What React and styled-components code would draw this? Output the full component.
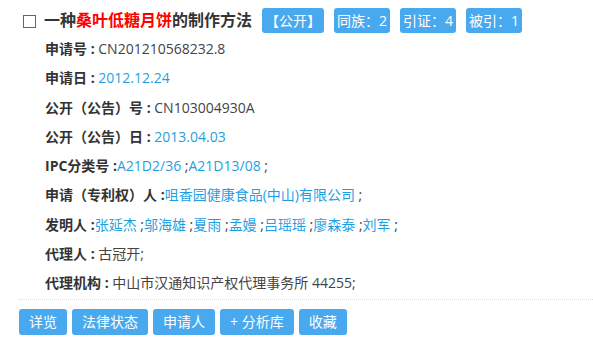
import React from 'react';
import styled, { createGlobalStyle } from 'styled-components';

const GlobalStyle = createGlobalStyle`
    body {
        margin: 0;
        background: #fff;
        font-family: "Open Sans", "Noto Sans CJK SC", sans-serif;
        color: #333;
    }
`;

const rows = [
    { label: '申请号 : ', items: [{ text: 'CN201210568232.8' }] },
    { label: '申请日 : ', items: [{ text: '2012.12.24', link: true }] },
    { label: '公开（公告）号 : ', items: [{ text: 'CN103004930A' }] },
    { label: '公开（公告）日 : ', items: [{ text: '2013.04.03', link: true }] },
    { label: 'IPC分类号 :', list: ['A21D2/36', 'A21D13/08'] },
    { label: '申请（专利权）人 :', list: ['咀香园健康食品(中山)有限公司'] },
    { label: '发明人 :', list: ['张延杰', '邬海雄', '夏雨', '孟嫚', '吕瑶瑶', '廖森泰', '刘军'] },
    { label: '代理人 : ', items: [{ text: '古冠开;' }] },
    { label: '代理机构 : ', items: [{ text: '中山市汉通知识产权代理事务所 44255;' }] },
];

const tags = ['【公开】', '同族：2', '引证：4', '被引：1'];
const actions = ['详览', '法律状态', '申请人', '+ 分析库', '收藏'];

const App = () => {
    return (
        <>
            <GlobalStyle />
            <Item>
                <TitleRow>
                    <Check />
                    <Title>
                        一种<Hit>桑叶低糖月饼</Hit>的制作方法
                    </Title>
                    <Tags>
                        {tags.map((t) => (
                            <Tag key={t}>{t}</Tag>
                        ))}
                    </Tags>
                </TitleRow>
                <Rows>
                    {rows.map((r) => (
                        <Row key={r.label}>
                            <Label>{r.label}</Label>
                            {r.items &&
                                r.items.map((it) =>
                                    it.link ? <Link key={it.text}>{it.text}</Link> : <span key={it.text}>{it.text}</span>
                                )}
                            {r.list &&
                                r.list.map((name) => (
                                    <React.Fragment key={name}>
                                        <Link>{name}</Link> ;
                                    </React.Fragment>
                                ))}
                        </Row>
                    ))}
                </Rows>
                <Actions>
                    {actions.map((a) => (
                        <Button key={a}>{a}</Button>
                    ))}
                </Actions>
            </Item>
        </>
    );
};

export default App;

const Item = styled.div`
    padding: 8px 0 0 19px;
`;

const TitleRow = styled.div`
    display: flex;
    align-items: center;
    height: 25px;
    padding-left: 4px;
`;

const Check = styled.span`
    width: 11px;
    height: 11px;
    border: 1px solid #666;
    margin-right: 8px;
    margin-top: 2px;
`;

const Title = styled.h1`
    margin: 0;
    font-size: 16px;
    font-weight: bold;
    color: #333;
    line-height: 25px;
`;

const Hit = styled.span`
    color: #ff0000;
`;

const Tags = styled.div`
    display: flex;
    gap: 10px;
    margin-left: 10px;
`;

const Tag = styled.span`
    background: #49a9ee;
    color: #fff;
    font-size: 14px;
    line-height: 25px;
    height: 25px;
    padding: 0 3px;
    border-radius: 3px;
`;

const Rows = styled.div`
    padding: 1px 0 0 26px;
`;

const Row = styled.div`
    font-size: 14px;
    line-height: 29.3px;
    color: #444;
    white-space: nowrap;
`;

const Label = styled.b`
    color: #333;
    font-weight: bold;
`;

const Link = styled.a`
    color: #1f9fe2;
    cursor: pointer;
`;

const Actions = styled.div`
    display: flex;
    gap: 5px;
    margin-top: 1px;
    padding-top: 9px;
    border-top: 1px dotted #ddd;
`;

const Button = styled.button`
    height: 26px;
    padding: 0 10px;
    border: none;
    border-radius: 3px;
    background: #49a9ee;
    color: #fff;
    font-family: "Open Sans", "Noto Sans CJK SC", sans-serif;
    font-size: 14px;
    line-height: 26px;
    cursor: pointer;
`;
